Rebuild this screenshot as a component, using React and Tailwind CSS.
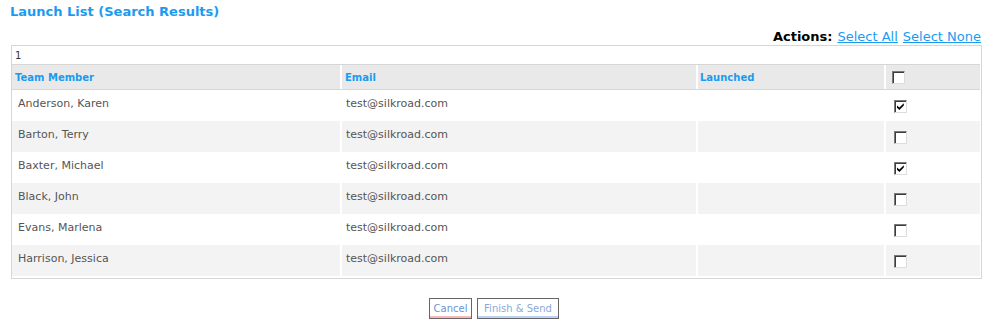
import React from "react"

const rows = [
  { name: "Anderson, Karen", email: "test@silkroad.com", checked: true },
  { name: "Barton, Terry", email: "test@silkroad.com", checked: false },
  { name: "Baxter, Michael", email: "test@silkroad.com", checked: true },
  { name: "Black, John", email: "test@silkroad.com", checked: false },
  { name: "Evans, Marlena", email: "test@silkroad.com", checked: false },
  { name: "Harrison, Jessica", email: "test@silkroad.com", checked: false },
]

function Checkbox({ checked }) {
  return (
    <span className="flex h-[13px] w-[13px] items-center justify-center border border-t-[#7a7a7a] border-l-[#7a7a7a] border-b-[#dcdcdc] border-r-[#dcdcdc] bg-white shadow-[inset_1px_1px_0_#3c3c3c]">
      {checked && (
        <svg width="9" height="9" viewBox="0 0 9 9">
          <path d="M1 3.4 L3.4 5.6 L7.8 1.2 L7.8 3.6 L3.4 8 L1 5.8 Z" fill="#000" />
        </svg>
      )}
    </span>
  )
}

function App() {
  return (
    <div className="min-h-[326px] bg-white pl-[11px] pr-[10px] pt-[2px] font-['DejaVu_Sans',Verdana,sans-serif]">
      <h1 className="-ml-px text-[13px] font-bold leading-[20px] text-[#1b9bf0]">Launch List (Search Results)</h1>

      <div className="mt-[7px] flex justify-end pr-px text-[13px] leading-[16px]">
        <span className="font-bold text-black">Actions:</span>
        <a href="#" className="ml-[5px] text-[#1b9bf0] underline">Select All</a>
        <a href="#" className="ml-[5px] text-[#1b9bf0] underline">Select None</a>
      </div>

      <div className="border border-[#d6d6d6] pr-px pb-[2px]">
        <div className="h-[19px] border-b border-[#d6d6d6] pl-[3px] text-[10px] leading-[19px] text-[#333]">1</div>

        <div className="grid grid-cols-[328px_354px_186px_1fr] gap-x-[2px] border-b border-[#d6d6d6] bg-white text-[10px] font-bold text-[#1b9bf0]">
          <div className="flex h-[24px] items-center bg-[#e9e9e9] pl-[3px]">Team Member</div>
          <div className="flex h-[24px] items-center bg-[#e9e9e9] pl-[3px]">Email</div>
          <div className="flex h-[24px] items-center bg-[#e9e9e9] pl-[2px]">Launched</div>
          <div className="flex h-[24px] items-center bg-[#e9e9e9] pl-[6px]">
            <Checkbox checked={false} />
          </div>
        </div>

        {rows.map((row, i) => {
          const bg = i % 2 === 1 ? "bg-[#f3f3f3]" : "bg-white"
          return (
            <div key={row.name} className="grid grid-cols-[328px_354px_186px_1fr] gap-x-[2px] bg-white text-[11px] text-[#555]">
              <div className={`flex h-[31px] items-start pt-[6px] pl-[6px] ${bg}`}>{row.name}</div>
              <div className={`flex h-[31px] items-start pt-[6px] pl-[4px] ${bg}`}>{row.email}</div>
              <div className={`h-[31px] ${bg}`}></div>
              <div className={`flex h-[31px] items-start pt-[10px] pl-[8px] ${bg}`}>
                <Checkbox checked={row.checked} />
              </div>
            </div>
          )
        })}
      </div>

      <div className="mt-[19px] flex justify-center gap-[5px] pr-[5px]">
        <button className="h-[21px] w-[43px] border border-[#666] bg-white text-[10px] text-[#6d93cf] shadow-[inset_0_-2px_0_#f7b9b9]">Cancel</button>
        <button className="h-[21px] w-[82px] border border-[#666] bg-white text-[10px] text-[#8aa9da] shadow-[inset_0_-2px_0_#bcd3f3]">Finish &amp; Send</button>
      </div>
    </div>
  )
}

export default App
